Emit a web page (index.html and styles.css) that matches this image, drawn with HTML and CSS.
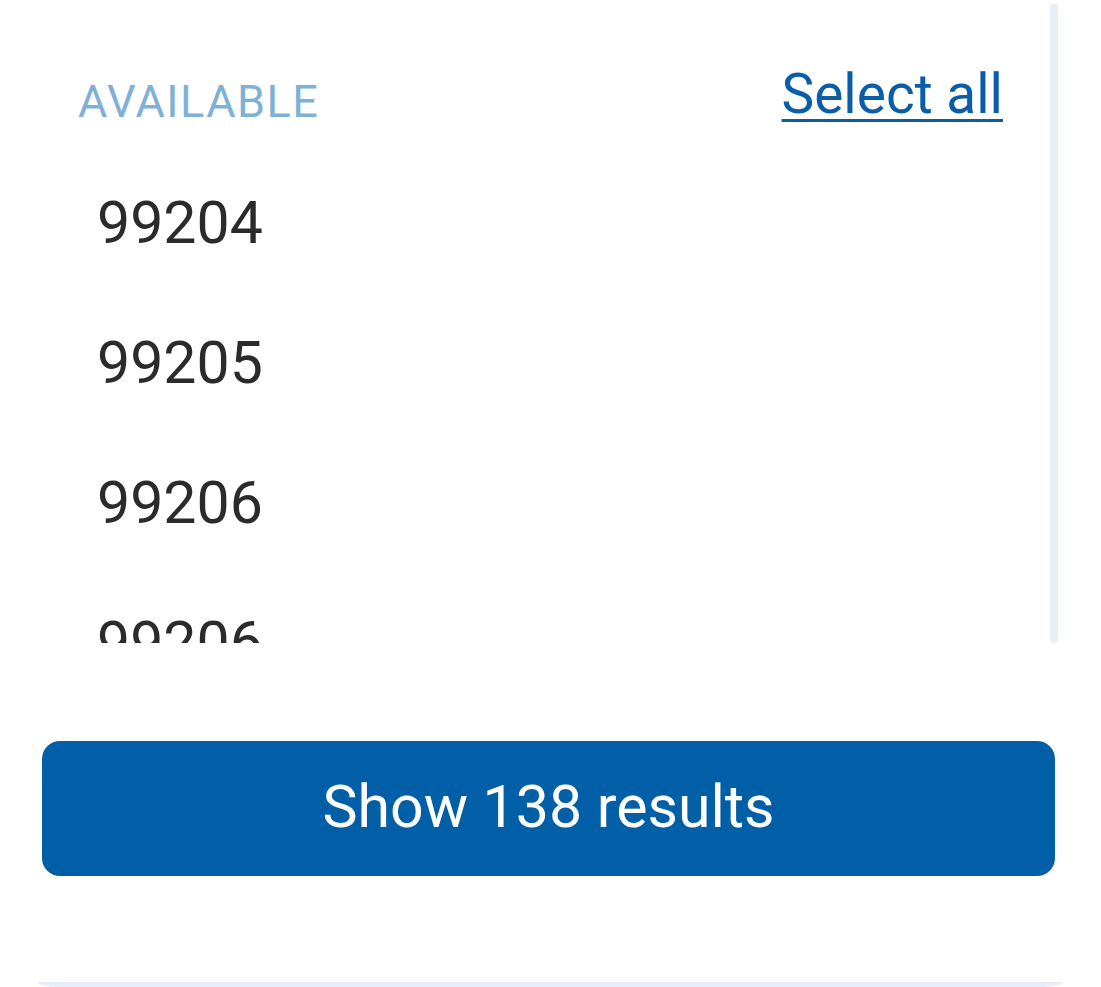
FILE: index.html
```html
<!DOCTYPE html>
<html lang="en">
<head>
    <meta charset="UTF-8">
    <meta name="viewport" content="width=device-width, initial-scale=1.0">
    <title>Filter | Available</title>
    <link rel="stylesheet" href="styles.css">
</head>
<body>
    <div class="filter-sheet">
        <div class="list-area">
            <div class="option-list">
                <div class="list-header">
                    <span class="list-title">AVAILABLE</span>
                    <a class="select-all" href="#">Select all</a>
                </div>
                <div class="option">99204</div>
                <div class="option">99205</div>
                <div class="option">99206</div>
                <div class="option">99206</div>
            </div>
            <div class="scroll-thumb"></div>
        </div>

        <button class="show-btn">Show 138 results</button>

        <div class="sheet-edge"></div>
    </div>
</body>
</html>
```

FILE: styles.css
```css
:root {
    --brand: #005fa7;
    --link: #0a5ea8;
    --muted: #7eb1d5;
    --text: #2b2b2b;
    --track: #e8eff7;
}

body {
    margin: 0;
    background: white;
    font-family: Roboto, "Noto Sans", sans-serif;
}

.filter-sheet {
    width: 1101px;
    height: 987px;
    overflow: hidden;
}

.list-area {
    display: flex;
    height: 643px;
}

.option-list {
    flex: 1;
    overflow: hidden;
    padding: 62px 47px 0 78px;
}

.list-header {
    display: flex;
    justify-content: space-between;
    align-items: flex-start;
    margin-bottom: 21px;
}

.list-title {
    margin-top: 10px;
    font-size: 45px;
    line-height: 60px;
    letter-spacing: 1.5px;
    color: var(--muted);
}

.select-all {
    font-size: 55px;
    line-height: 64px;
    color: var(--link);
    text-decoration: underline;
    text-decoration-thickness: 3px;
    text-underline-offset: 6px;
}

.option {
    height: 140px;
    line-height: 140px;
    padding-left: 19px;
    font-size: 59px;
    color: var(--text);
}

.scroll-thumb {
    width: 8px;
    margin: 4px 43px 0 0;
    background: var(--track);
    border-radius: 2px 2px 5px 5px;
}

.show-btn {
    display: block;
    width: 1013px;
    height: 135px;
    margin: 98px 0 0 42px;
    padding: 0 0 4px;
    border: none;
    border-radius: 18px;
    background: var(--brand);
    color: white;
    font-family: inherit;
    font-size: 59px;
    line-height: 131px;
    cursor: pointer;
}

.sheet-edge {
    height: 5px;
    margin: 106px 38px 0;
    background: var(--track);
    border-radius: 0 0 20px 20px / 0 0 5px 5px;
}
```
